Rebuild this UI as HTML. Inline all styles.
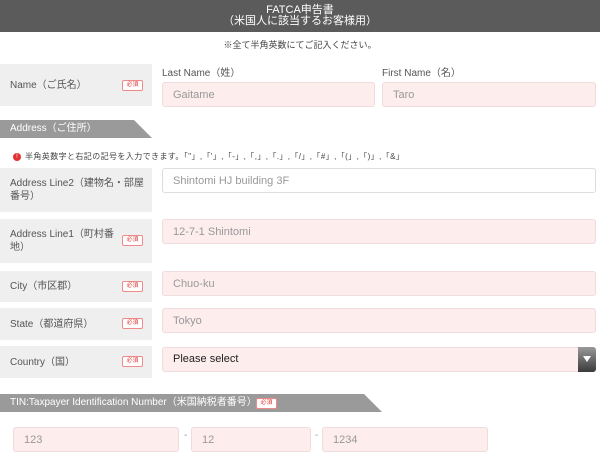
<!DOCTYPE html>
<html><head><meta charset="utf-8"><style>
*{margin:0;padding:0;box-sizing:border-box}
body{width:600px;height:452px;background:#fff;font-family:"Liberation Sans","Noto Sans CJK JP",sans-serif;position:relative;overflow:hidden;color:#555}
.a{position:absolute}
.hd{left:0;top:0;width:600px;height:32px;background:#5b5b5b;color:#fff;text-align:center;font-size:11px;line-height:11px;padding-top:5px}
.lb{background:#efefef;left:0;width:152px;font-size:10px;color:#555;padding-left:10px;line-height:13px;display:flex;align-items:center}
.bd{position:absolute;left:122px;width:21px;height:11px;border:1px solid #f08a8a;border-radius:2px;background:#fff;color:#e04040;font-size:6px;line-height:9px;text-align:center}
.in{background:#fdeded;border:1px solid #f0dcdc;border-radius:3px;font-size:11px;color:#999;padding-left:10px;display:flex;align-items:center;height:25px}
.w{background:#fff;border-color:#ddd}
.sm{font-size:9px;color:#444}
</style></head><body>
<div class="a hd">FATCA申告書<br>（米国人に該当するお客様用）</div>
<div class="a sm" style="left:0;width:600px;top:38px;text-align:center">※全て半角英数にてご記入ください。</div>

<div class="a lb" style="top:64px;height:42px">Name（ご氏名）<span class="bd" style="top:16px">必須</span></div>
<div class="a" style="left:162px;top:64px;font-size:10px">Last Name（姓）</div>
<div class="a" style="left:382px;top:64px;font-size:10px">First Name（名）</div>
<div class="a in" style="left:162px;top:82px;width:213px">Gaitame</div>
<div class="a in" style="left:382px;top:82px;width:214px">Taro</div>

<svg class="a" style="left:0;top:120px" width="152" height="19"><polygon points="0,0 134,0 152,18 0,18" fill="#9a9a9a"/></svg>
<div class="a" style="left:10px;top:120px;color:#fff;font-size:10px;line-height:18px">Address（ご住所）</div>

<div class="a" style="left:13px;top:153px;width:8px;height:8px;border-radius:50%;background:#e53030;color:#fff;font-size:6px;line-height:8px;text-align:center">!</div>
<div class="a" style="left:25px;top:151px;font-size:8px;color:#444;letter-spacing:0.4px;white-space:nowrap">半角英数字と右記の記号を入力できます。「"」,「'」,「-」,「,」,「.」,「/」,「#」,「(」,「)」,「&」</div>

<div class="a lb" style="top:168px;height:44px;padding-right:4px">Address Line2（建物名・部屋番号）</div>
<div class="a in w" style="left:162px;top:168px;width:434px">Shintomi HJ building 3F</div>

<div class="a lb" style="top:219px;height:44px;padding-right:30px">Address Line1（町村番地）<span class="bd" style="top:16px">必須</span></div>
<div class="a in" style="left:162px;top:219px;width:434px">12-7-1 Shintomi</div>

<div class="a lb" style="top:271px;height:31px">City（市区郡）<span class="bd" style="top:10px">必須</span></div>
<div class="a in" style="left:162px;top:271px;width:434px">Chuo-ku</div>

<div class="a lb" style="top:308px;height:32px">State（都道府県）<span class="bd" style="top:10px">必須</span></div>
<div class="a in" style="left:162px;top:308px;width:434px">Tokyo</div>

<div class="a lb" style="top:346px;height:32px">Country（国）<span class="bd" style="top:10px">必須</span></div>
<div class="a in" style="left:162px;top:347px;width:434px;color:#222;font-size:11px;align-items:flex-start;padding-top:5px">Please select</div>
<div class="a" style="left:578px;top:347px;width:18px;height:25px;background:linear-gradient(#999,#3a3a3a);border-radius:0 3px 3px 0"></div>
<svg class="a" style="left:583px;top:355px" width="8" height="8"><polygon points="0,1 8,1 4,7" fill="#fff"/></svg>

<svg class="a" style="left:0;top:394px" width="382" height="19"><polygon points="0,0 364,0 382,18 0,18" fill="#9a9a9a"/></svg>
<div class="a" style="left:10px;top:394px;color:#fff;font-size:10px;line-height:18px">TIN:Taxpayer Identification Number（米国納税者番号）</div>
<span class="bd" style="left:256px;top:398px;border-color:#f08a8a">必須</span>

<div class="a in" style="left:13px;top:427px;width:166px">123</div>
<div class="a" style="left:184px;top:430px;font-size:10px;color:#999">-</div>
<div class="a in" style="left:191px;top:427px;width:120px">12</div>
<div class="a" style="left:315px;top:430px;font-size:10px;color:#999">-</div>
<div class="a in" style="left:322px;top:427px;width:166px">1234</div>
</body></html>
